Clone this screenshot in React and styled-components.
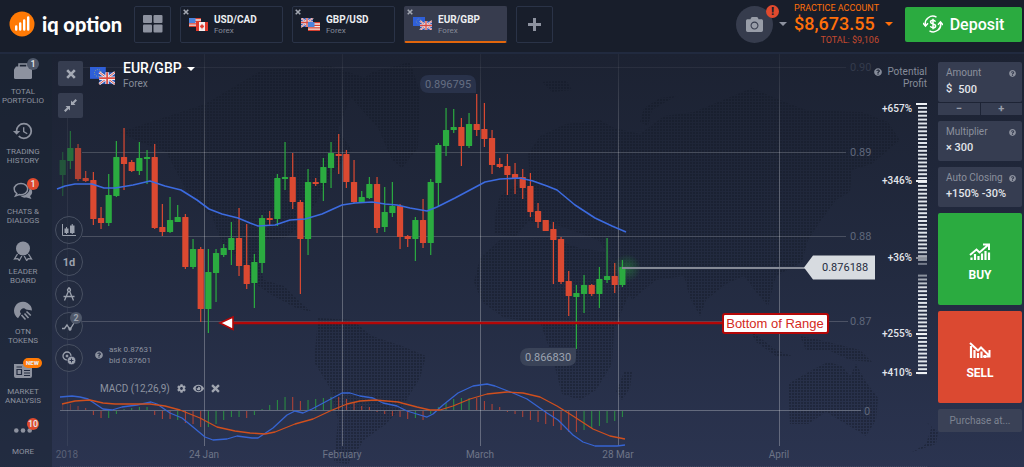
import React, { useState } from 'react'
import styled, { createGlobalStyle } from 'styled-components'
import { FaCamera, FaCog, FaEye, FaQuestionCircle } from 'react-icons/fa'
import { MdHistory } from 'react-icons/md'

const GREEN = '#2bab40'
const RED = '#db4931'
const STEP = 7.667

// high, body top, body bottom, low, up/down, macd histogram
const candles = [
  [152, 160, 175, 196, 1, 6, 0],
  [131, 148, 161, 169, 1, 6, 0],
  [144, 148, 179, 181, 0, 4],
  [171, 178, 181, 182, 0, 2],
  [172, 180, 219, 225, 0, -4],
  [207, 218, 223, 229, 0, -7],
  [174, 195, 223, 226, 1, -7],
  [141, 157, 196, 197, 1, -3],
  [128, 157, 164, 190, 0, 1, 1],
  [160, 162, 171, 172, 0, 2, 1],
  [142, 158, 171, 175, 1, 3],
  [150, 157, 159, 184, 1, 3],
  [144, 157, 228, 229, 0, -4],
  [204, 227, 232, 236, 0, -8],
  [197, 220, 232, 233, 1, -8, 0],
  [205, 217, 222, 222, 1, -9],
  [214, 217, 267, 269, 0, -12],
  [239, 249, 267, 269, 1, -13, 0],
  [247, 249, 309, 322, 0, -16],
  [249, 272, 309, 333, 1, -16],
  [249, 253, 273, 302, 1, -13],
  [244, 248, 255, 257, 1, -9],
  [222, 238, 250, 265, 1, -6],
  [208, 238, 266, 276, 0, -6, 1],
  [224, 265, 284, 289, 0, -7],
  [254, 262, 283, 308, 1, -4],
  [215, 218, 263, 273, 1, 1],
  [211, 218, 219, 225, 0, 5, 1],
  [174, 178, 219, 226, 1, 10],
  [142, 177, 179, 190, 1, 13],
  [153, 177, 202, 209, 0, 13],
  [200, 202, 239, 294, 0, 9],
  [169, 182, 239, 255, 1, 10],
  [178, 182, 183, 186, 0, 11, 1],
  [158, 167, 183, 201, 1, 12],
  [142, 153, 168, 188, 1, 13],
  [134, 154, 156, 174, 0, 13],
  [150, 154, 182, 188, 0, 11],
  [160, 182, 202, 203, 0, 8],
  [191, 197, 202, 203, 1, 4, 0],
  [177, 184, 198, 199, 1, 3, 0],
  [177, 184, 228, 233, 0, -1],
  [187, 212, 227, 232, 1, -3, 0],
  [182, 206, 213, 217, 1, -5, 0],
  [204, 206, 237, 249, 0, -6],
  [235, 236, 239, 247, 0, -8],
  [217, 220, 239, 261, 1, -7],
  [199, 220, 243, 248, 0, -9],
  [179, 182, 243, 255, 1, -3],
  [143, 145, 183, 206, 1, 3],
  [108, 130, 146, 156, 1, 7],
  [109, 127, 130, 133, 1, 11],
  [118, 127, 146, 166, 0, 12, 1],
  [113, 124, 146, 148, 1, 12],
  [94, 124, 130, 136, 0, 12],
  [103, 129, 139, 147, 0, 9],
  [130, 138, 165, 174, 0, 6],
  [158, 164, 167, 168, 0, 3],
  [154, 166, 175, 195, 0, -1],
  [163, 174, 178, 194, 0, -3],
  [169, 177, 188, 199, 0, -6],
  [173, 186, 212, 217, 0, -9],
  [203, 211, 222, 228, 0, -11],
  [220, 220, 231, 231, 0, -13],
  [222, 229, 240, 284, 0, -15],
  [237, 239, 282, 284, 0, -19],
  [271, 281, 296, 316, 0, -21],
  [285, 293, 297, 349, 1, -21, 0],
  [275, 285, 294, 313, 1, -19],
  [284, 285, 294, 296, 0, -17, 1],
  [267, 279, 294, 308, 1, -15],
  [238, 276, 280, 283, 1, -12],
  [263, 276, 285, 293, 0, -10, 1],
  [260, 267, 285, 287, 1, -6],
]

const average =
  '57,189 65,186 75,184 92,184 104,188 115,188 133,185 150,181 165,186 181,190 197,200 209,209 222,214 238,218 250,223 258,226 275,225 290,220 305,219 322,214 342,205 355,203 372,202 385,204 397,205 410,208 427,211 437,207 455,198 470,190 485,182 500,179 520,178 533,181 547,186 557,190 575,205 595,218 612,226 626,232'
const macdLine =
  '60,397 72,396 80,397 88,399 103,409 112,410 122,407 137,405 151,402 157,404 170,413 182,418 193,427 205,437 213,440 227,439 237,436 252,438 258,438 273,428 287,415 295,411 303,413 312,409 327,401 342,393 350,393 360,396 373,398 383,403 397,406 407,411 420,415 427,417 433,414 443,405 458,393 473,386 487,384 495,386 513,393 527,399 547,413 558,420 573,435 583,442 595,446 617,446 625,445'
const signalLine =
  '62,404 75,401 90,400 103,403 115,404 150,404 165,406 180,410 200,418 217,427 235,431 250,433 265,434 275,432 295,424 313,419 330,411 347,404 360,401 375,400 398,402 417,407 430,410 440,410 453,406 470,399 487,394 507,392 523,393 540,397 557,406 573,416 593,429 610,436 625,439'

const continents = [
  'M120 132L150 122L205 104L225 92L262 70L330 66L372 80L388 96L350 98L338 130L352 150L330 176L318 200L300 226L285 238L262 240L258 262L264 280L284 286L300 302L312 312L296 308L270 294L250 280L238 258L222 244L212 216L198 204L186 190L166 152L140 142Z',
  'M346 92L372 72L410 62L420 92L418 148L402 168L392 160L378 128Z',
  'M318 318L352 320L372 336L402 346L426 356L420 378L404 404L386 424L364 440L348 464L334 462L338 420L330 388L314 362Z',
  'M480 258L500 240L548 238L580 248L606 252L622 276L636 280L624 306L614 330L612 364L596 390L580 400L562 394L552 356L540 322L504 318L482 302L474 282Z',
  'M496 210L500 196L530 176L528 154L540 136L566 124L600 120L614 128L640 134L664 116L694 112L752 88L780 100L806 110L862 112L888 122L900 140L872 164L852 170L850 192L836 200L820 222L808 240L802 262L776 276L768 306L756 292L744 276L726 284L706 300L700 316L690 298L684 276L656 280L632 300L620 270L598 240L560 226L528 222L516 236L494 234Z',
  'M788 384L812 370L828 362L842 366L850 376L856 364L866 382L878 398L876 420L866 436L846 424L826 412L808 424L790 424Z',
  'M750 330L776 350L792 356L776 356L756 342Z',
  'M800 336L820 340L860 350L872 362L850 360L828 350L806 350Z',
  'M624 372L632 372L630 388L622 400L616 392Z',
  'M640 122L644 108L660 98L676 96L652 110L648 126Z',
  'M542 82L566 80L572 90L552 92Z',
  'M912 452L926 444L932 426L926 422L938 432L936 444Z',
]

const sidebar = [
  ['bag', 'TOTAL', 'PORTFOLIO', '1'],
  ['history', 'TRADING', 'HISTORY'],
  ['chat', 'CHATS &', 'DIALOGS', '1', true],
  ['medal', 'LEADER', 'BOARD'],
  ['otn', 'OTN', 'TOKENS'],
  ['news', 'MARKET', 'ANALYSIS', 'NEW'],
  ['more', 'MORE', '', '10', true],
]

const GlobalStyle = createGlobalStyle`
  * {
    box-sizing: border-box;
  }

  body {
    margin: 0;
    background: #181e2b;
    font-family: Roboto, "Liberation Sans", sans-serif;
    color: #fff;
  }

  button, input {
    font-family: inherit;
    color: inherit;
    border: none;
    padding: 0;
    margin: 0;
  }

  button {
    cursor: pointer;
  }

  svg {
    display: block;
  }
`

const FlagArt = ({ code }) => {
  if (code === 'EU') {
    return (
      <g>
        <rect width="12" height="9" fill="#2f5fd8" />
        <circle cx="6" cy="4.5" r="2.6" fill="none" stroke="#7e9a8c" strokeWidth=".8" strokeDasharray=".7 .9" />
      </g>
    )
  }
  if (code === 'US') {
    return (
      <g>
        <rect width="12" height="9" fill="#f1e6e4" />
        <path d="M0 .7H12M0 3.3H12M0 5.9H12M0 8.4H12" stroke="#d8402f" strokeWidth="1.2" />
        <rect width="6.5" height="5" fill="#4a83dc" />
      </g>
    )
  }
  if (code === 'CA') {
    return (
      <g>
        <rect width="12" height="9" fill="#f3eeee" />
        <path d="M0 0H3V9H0ZM9 0H12V9H9Z" fill="#e0392b" />
        <path d="M6 1.8L7 3.6L8.3 3.7L7.4 5.6L6.3 6V7.2H5.7V6L4.6 5.6L3.7 3.7L5 3.6Z" fill="#e0392b" />
      </g>
    )
  }
  return (
    <g>
      <rect width="12" height="9" fill="#2f55b4" />
      <path d="M0 0L12 9M12 0L0 9" stroke="#eceef5" strokeWidth="1.9" />
      <path d="M0 0L12 9M12 0L0 9" stroke="#db4a40" strokeWidth=".7" />
      <path d="M6 0V9M0 4.5H12" stroke="#eceef5" strokeWidth="2.6" />
      <path d="M6 0V9M0 4.5H12" stroke="#db4a40" strokeWidth="1.3" />
    </g>
  )
}

const FlagPair = ({ back, front, width }) => (
  <svg width={width} viewBox="0 0 19 13" aria-hidden="true">
    <FlagArt code={back} />
    <g transform="translate(7 4)">
      <FlagArt code={front} />
    </g>
  </svg>
)

const Cross = ({ size }) => (
  <svg width={size} height={size} viewBox="0 0 10 10" aria-hidden="true">
    <path d="M1.2 1.2L8.8 8.8M8.8 1.2L1.2 8.8" stroke="currentColor" strokeWidth="2.6" />
  </svg>
)

const SideIcon = ({ name }) => {
  if (name === 'history') return <MdHistory size={22} />
  return (
    <svg width="20" height="20" viewBox="0 0 20 20" fill="currentColor" aria-hidden="true">
      {name === 'bag' && (
        <>
          <path d="M6 6V3H14V6" fill="none" stroke="currentColor" strokeWidth="1.5" />
          <path d="M3 5.5H17L19 8.5V16.5Q19 18 17.5 18H2.5Q1 18 1 16.5V8.5Z" />
        </>
      )}
      {name === 'chat' && (
        <>
          <path d="M8 2.5C4 2.5 1.2 5 1.2 8C1.2 10 2.3 11.5 3.8 12.5L2.5 15L6.4 13.6C11 14.2 14.7 11.5 14.7 8C14.7 5 12 2.5 8 2.5Z" fill="none" stroke="currentColor" strokeWidth="1.5" />
          <path d="M16.5 6.5C20.5 9 19.5 13.5 17 15L18.5 18L13.5 16.5C10.5 17 8.5 16 7.5 14.8C13 15 16.8 11.5 16.5 6.5Z" />
        </>
      )}
      {name === 'medal' && (
        <>
          <circle cx="10" cy="7.5" r="7" />
          <path d="M4.5 13L1.5 18L4.8 17.6L6.3 19.5L8.8 15M15.5 13L18.5 18L15.2 17.6L13.7 19.5L11.2 15" fill="none" stroke="currentColor" strokeWidth="1.3" />
        </>
      )}
      {name === 'otn' && (
        <>
          <path d="M5 17.2A9 9 0 1 1 19 9.5L13 8.5A3.2 3.2 0 1 0 8 12.8Z" />
          <path d="M8.5 14L12.5 18.5M11.5 12.5L15.5 17M13.5 10.5L17.8 14.5" stroke="currentColor" strokeWidth="1.6" />
        </>
      )}
      {name === 'news' && (
        <>
          <path d="M1 3H19V15Q19 17 17 17H3Q1 17 1 15Z" />
          <path d="M3.5 6H9M4 8.500H8.500V13.500H4ZM11 9.500H17M11 12H17M11 14.500H17" stroke="#222a3f" strokeWidth="1.2" fill="none" />
        </>
      )}
      {name === 'more' && (
        <>
          <circle cx="3.3" cy="9.5" r="2.3" />
          <circle cx="10" cy="9.5" r="2.3" />
          <circle cx="16.7" cy="9.5" r="2.3" />
        </>
      )}
    </svg>
  )
}

const Header = () => (
  <TopBar>
    <Logo href="#home">
      <svg width="26" height="26" viewBox="0 0 26 26" aria-hidden="true">
        <circle cx="13" cy="13" r="12.5" fill="#ff7a05" />
        <path d="M7.2 18.5V15.5M11.2 18.5V12.5M15.2 18.5V9.5M19.2 18.5V6.5" stroke="#fff" strokeWidth="2.4" strokeLinecap="round" />
      </svg>
      <span>iq option</span>
    </Logo>
    <Tabs>
      <SquareButton aria-label="All instruments">
        <svg width="20" height="18" viewBox="0 0 20 18" fill="#8d929f">
          <rect width="9" height="8" rx="1" />
          <rect x="10.5" width="9" height="8" rx="1" />
          <rect y="9.5" width="9" height="8" rx="1" />
          <rect x="10.5" y="9.5" width="9" height="8" rx="1" />
        </svg>
      </SquareButton>
      {[
        ['USD/CAD', 'US', 'CA'],
        ['GBP/USD', 'GB', 'US'],
        ['EUR/GBP', 'EU', 'GB'],
      ].map(([pair, back, front]) => (
        <Tab key={pair} $active={pair === 'EUR/GBP'}>
          <TabClose><Cross size={6} /></TabClose>
          <FlagPair back={back} front={front} width={19} />
          <TabText>
            <b>{pair}</b>
            <span>Forex</span>
          </TabText>
        </Tab>
      ))}
      <SquareButton aria-label="Add instrument">
        <svg width="13" height="13" viewBox="0 0 13 13">
          <path d="M6.5 0V13M0 6.5H13" stroke="#8d929f" strokeWidth="3" />
        </svg>
      </SquareButton>
    </Tabs>
    <Account>
      <Avatar aria-label="Profile">
        <FaCamera size={17} />
        <AlertBadge>!</AlertBadge>
      </Avatar>
      <Caret $color="#8d929f" />
      <Balance>
        <small>PRACTICE ACCOUNT</small>
        <strong>$8,673.55</strong>
        <em>TOTAL: $9,106</em>
      </Balance>
      <Caret $color="#ff6f0a" />
      <Deposit>
        <svg width="20" height="18" viewBox="0 0 20 18" fill="none" stroke="#fff" strokeWidth="1.5" aria-hidden="true">
          <path d="M2.5 10.5A7.5 7.5 0 0 1 13.5 2.2M17.5 7.5A7.5 7.5 0 0 1 6.5 15.8" />
          <path d="M0 8L2.5 11L5 8.2M15 9.8L17.5 7L20 10" />
          <path d="M12.5 6.7C12 5.6 11 5.3 10 5.3C8.5 5.3 7.5 6 7.5 7.1C7.5 9.6 12.6 8.2 12.6 10.9C12.6 12 11.5 12.7 10 12.7C8.8 12.7 7.7 12.2 7.4 11.1M10 3.8V14.2" />
        </svg>
        Deposit
      </Deposit>
    </Account>
  </TopBar>
)

const Chart = () => (
  <Plot viewBox="52 54 886 413" preserveAspectRatio="xMinYMin meet" aria-label="EUR/GBP chart">
    <defs>
      <pattern id="dots" width="3" height="3" patternUnits="userSpaceOnUse">
        <rect width="2" height="2" fill="#131926" />
      </pattern>
      <radialGradient id="glow">
        <stop offset="0" stopColor={GREEN} stopOpacity=".4" />
        <stop offset="1" stopColor={GREEN} stopOpacity="0" />
      </radialGradient>
      <linearGradient id="fade" x1="0" y1="54" x2="0" y2="180" gradientUnits="userSpaceOnUse">
        <stop offset="0" stopColor="#fff" stopOpacity=".04" />
        <stop offset="1" stopColor="#fff" stopOpacity=".27" />
      </linearGradient>
    </defs>
    <g fill="url(#dots)" opacity=".4">
      {continents.map((d) => <path key={d} d={d} />)}
    </g>
    <g fill="url(#fade)">
      {[204, 342, 480, 618, 779].map((x) => <rect key={x} x={x} y="54" width="1" height="392" />)}
    </g>
    <g stroke="#fff" fill="none">
      <path d="M67.5 118V446M82 67.5H846" opacity=".06" />
      <path d="M82 152.5H846M82 236.5H846M82 321.5H848" opacity=".18" />
      <path d="M60 410.5H861" opacity=".28" />
      <path d="M60 466.5H927" opacity=".1" strokeDasharray="1 1" />
    </g>
    <g fontSize="11" fill="#5f677b">
      <text x="850" y="71" opacity=".35">0.90</text>
      <text x="850" y="156">0.89</text>
      <text x="850" y="240">0.88</text>
      <text x="850" y="325">0.87</text>
      <text x="864" y="415">0</text>
    </g>
    <g fontSize="10" fill="#6d7487" textAnchor="middle">
      <text x="67" y="458" opacity=".7">2018</text>
      <text x="204" y="458">24 Jan</text>
      <text x="342" y="458">February</text>
      <text x="480" y="458">March</text>
      <text x="618" y="458">28 Mar</text>
      <text x="779" y="458">April</text>
    </g>

    {candles.map(([high, top, bottom, low, up, hist, histUp = up], i) => {
      const x = 62.7 + i * STEP
      const color = up ? GREEN : RED
      return (
        <g key={i} opacity={[0.35, 0.55, 0.75, 0.85][i] || 1}>
          <rect x={x - 0.6} y={high} width="1.2" height={low - high} fill={color} />
          <rect x={x - 3.1} y={top} width="6.2" height={Math.max(bottom - top, 2)} rx=".6" fill={color} />
          <rect
            x={x - 0.5}
            y={hist > 0 ? 410 - hist : 411}
            width="1"
            height={Math.abs(hist)}
            fill={histUp ? GREEN : RED}
            opacity=".8"
          />
        </g>
      )
    })}
    <g fill="none" strokeLinejoin="round">
      <polyline points={average} stroke="#3c6be0" strokeWidth="1.6" />
      <polyline points={macdLine} stroke="#3664d2" strokeWidth="1.3" />
      <polyline points={signalLine} stroke="#d04f1d" strokeWidth="1.3" />
    </g>

    <circle cx="627" cy="268" r="14" fill="url(#glow)" />
    <rect x="622" y="267" width="184" height="2" fill="#858a96" />
    <path d="M804 267.5L813 255.5H875V279.5H813Z" fill="#d7dbe0" />
    <text x="822" y="271" fontSize="11" fill="#252c3f">0.876188</text>

    <path d="M429 75H467Q476 75 476 84V93H429Q420 93 420 84Q420 75 429 75Z" fill="#29324a" />
    <text x="448" y="88" fontSize="11" fill="#656e82" textAnchor="middle">0.896795</text>
    <path d="M529 348H576V358Q576 366 567 366H529Q520 366 520 357Q520 348 529 348Z" fill="#3a4358" />
    <text x="548" y="361" fontSize="11" fill="#9ca3b1" textAnchor="middle">0.866830</text>

    <path d="M233 323H722" stroke="#b40707" strokeWidth="2.4" />
    <path d="M220 323L233 317V329.5Z" fill="#fff" stroke="#b40707" strokeWidth="1.6" />
    <rect x="723" y="314" width="105" height="19" rx="2" fill="#fff" stroke="#b40707" strokeWidth="2" />
    <text x="775" y="328" fontSize="13" fontFamily="Liberation Sans, sans-serif" fill="#d42a22" textAnchor="middle">
      Bottom of Range
    </text>
  </Plot>
)

const ChartTools = () => (
  <ToolColumn>
    <ToolSquare aria-label="Close chart"><Cross size={10} /></ToolSquare>
    <ToolSquare aria-label="Collapse">
      <svg width="13" height="13" viewBox="0 0 13 13" fill="currentColor">
        <path d="M7 6V1.5L8.5 3L11.5 0L13 1.5L10 4.5L11.5 6ZM6 7V11.5L4.5 10L1.5 13L0 11.5L3 8.5L1.5 7Z" />
      </svg>
    </ToolSquare>
    <RoundTools>
      <RoundTool aria-label="Chart type">
        <svg width="14" height="12" viewBox="0 0 14 12" fill="currentColor">
          <path d="M.5 0V11.5H14" fill="none" stroke="currentColor" />
          <path d="M2.500 4.500H6.500V9H2.500ZM4 3H5V10H4ZM8 1.500H12.500V9H8ZM9.700 0H10.800V10H9.700Z" />
        </svg>
      </RoundTool>
      <RoundTool aria-label="Candle size">1d</RoundTool>
      <RoundTool aria-label="Drawing">
        <svg width="14" height="14" viewBox="0 0 14 14" fill="none" stroke="currentColor" strokeWidth="1.3">
          <circle cx="7" cy="3" r="1.5" />
          <path d="M7 0V2M6.3 4.5L2.5 13.5M7.7 4.5L11.5 13.5M1.5 9.5H12.5" />
        </svg>
      </RoundTool>
      <RoundTool aria-label="Indicators">
        <svg width="14" height="10" viewBox="0 0 14 10" fill="none" stroke="currentColor" strokeWidth="1.3">
          <path d="M0 7.5H2.5L5 4L8 8.5L12 2" />
          <circle cx="8" cy="8" r="1" />
        </svg>
        <ToolBadge>2</ToolBadge>
      </RoundTool>
      <RoundTool aria-label="Trade options">
        <svg width="14" height="14" viewBox="0 0 14 14" fill="none" stroke="currentColor">
          <circle cx="5" cy="5" r="4" strokeWidth="1.3" />
          <circle cx="5" cy="5" r="1" fill="currentColor" />
          <circle cx="9.5" cy="9.5" r="4.3" fill="currentColor" stroke="#29314a" strokeWidth=".8" />
          <path d="M9.5 7.5V11.5M7.5 9.5H11.5" stroke="#29314a" />
        </svg>
      </RoundTool>
    </RoundTools>
  </ToolColumn>
)

const ChartInfo = () => (
  <InfoColumn>
    <PairTitle>
      <FlagPair back="EU" front="GB" width={25} />
      <PairText>
        <h1>EUR/GBP <Caret $color="#fff" /></h1>
        <span>Forex</span>
      </PairText>
    </PairTitle>
    <Quotes>
      <FaQuestionCircle size={8} />
      <p>ask 0.87631<br />bid 0.87601</p>
    </Quotes>
    <Indicator>
      <span>MACD (12,26,9)</span>
      <button aria-label="Indicator settings"><FaCog size={9} /></button>
      <button aria-label="Hide indicator"><FaEye size={11} /></button>
      <button aria-label="Remove indicator"><Cross size={9} /></button>
    </Indicator>
  </InfoColumn>
)

const ticks = Array.from({ length: 70 }, (_, i) => i * 3.9)
const marks = [['+657%', 0, 5], ['+346%', 77, 77], ['+36%', 154, 154], ['+255%', 230, 230], ['+410%', 269, 269]]

const ProfitScale = () => (
  <Profit>
    <ProfitTitle>
      <FaQuestionCircle size={8} />
      <span>Potential<br />Profit</span>
    </ProfitTitle>
    <svg width="48" height="278" viewBox="0 0 48 278">
      {ticks.filter((y) => y < 160 || y > 168).map((y) => (
        <rect
          key={y}
          x="39"
          y={y}
          width="9"
          height="2"
          fill="#dfe4ea"
          opacity={Math.min(1, 0.3 + Math.abs(y - 164) / 30)}
        />
      ))}
      {marks.map(([label, tick, y]) => (
        <g key={label}>
          <rect x="37" y={tick} width="11" height="2" fill="#eef1f4" opacity={label === '+36%' ? 0.5 : 1} />
          <text x="33" y={y + 4} fontSize="10" fontWeight="500" fill="#e4e7ec" textAnchor="end">{label}</text>
        </g>
      ))}
    </svg>
  </Profit>
)

const TradePanel = () => {
  const [amount, setAmount] = useState(500)

  return (
    <Trade>
      <div>
        <Field>
          <FieldLabel htmlFor="amount">Amount <FaQuestionCircle size={7} /></FieldLabel>
          <AmountRow>
            <span>$</span>
            <input id="amount" value={amount} onChange={(e) => setAmount(Number(e.target.value) || 0)} />
          </AmountRow>
        </Field>
        <Stepper>
          <button onClick={() => setAmount(Math.max(0, amount - 1))} aria-label="Decrease">−</button>
          <button onClick={() => setAmount(amount + 1)} aria-label="Increase">+</button>
        </Stepper>
      </div>
      <Field as="button">
        <FieldLabel as="span">Multiplier <FaQuestionCircle size={7} /></FieldLabel>
        <FieldValue>× 300</FieldValue>
      </Field>
      <Field as="button">
        <FieldLabel as="span">Auto Closing <FaQuestionCircle size={7} /></FieldLabel>
        <FieldValue>+150% -30%</FieldValue>
      </Field>
      <TradeButton $color={GREEN}>
        <svg width="22" height="18" viewBox="0 0 22 18" fill="none" stroke="#fff" strokeWidth="2" aria-hidden="true">
          <path d="M1 12L7.5 6.5L10.5 9.5L19 2M14 1.5H20V7" />
          <path d="M2.5 17V14.5M6 17V11M9.5 17V13M13 17V10.5M16.5 17V8M20 17V9.5" strokeWidth="2.2" />
        </svg>
        BUY
      </TradeButton>
      <TradeButton $color={RED}>
        <svg width="22" height="18" viewBox="0 0 22 18" fill="none" stroke="#fff" strokeWidth="2" aria-hidden="true">
          <path d="M1 2L9 9.5L12 6.5L20 14.5M20.5 9V15.5H14" />
          <path d="M2 17V5M5.5 17V9M9 17V12M12.5 17V10.5M16 17V14" strokeWidth="2.2" />
        </svg>
        SELL
      </TradeButton>
      <Purchase>Purchase at...</Purchase>
    </Trade>
  )
}

const App = () => (
  <Page>
    <GlobalStyle />
    <Header />
    <Body>
      <Sidebar>
        {sidebar.map(([icon, first, second, badge, alert]) => (
          <SideLink key={icon} href={`#${icon}`}>
            <IconBox>
              <SideIcon name={icon} />
              {badge === 'NEW' && <NewBadge>NEW</NewBadge>}
              {badge && badge !== 'NEW' && <SideBadge $alert={alert}>{badge}</SideBadge>}
            </IconBox>
            <span>{first}<br />{second}</span>
          </SideLink>
        ))}
      </Sidebar>
      <ChartArea>
        <Chart />
        <ChartTools />
        <ChartInfo />
        <ProfitScale />
      </ChartArea>
      <TradePanel />
    </Body>
  </Page>
)

const Page = styled.div`
  min-height: 100vh;
  display: flex;
  flex-direction: column;
`

const TopBar = styled.header`
  height: 54px;
  padding: 0 2px 4px 9px;
  display: flex;
  align-items: center;
  background: #181e2b;
  border-bottom: 2px solid #212a3f;
`

const Logo = styled.a`
  width: 125px;
  display: flex;
  align-items: center;
  gap: 7px;
  color: #fff;
  text-decoration: none;

  span {
    font: 900 20px/24px Lato, sans-serif;
    white-space: nowrap;
  }
`

const Tabs = styled.nav`
  display: flex;
  gap: 9px;
  flex: 1;
`

const SquareButton = styled.button`
  width: 37px;
  height: 37px;
  display: flex;
  align-items: center;
  justify-content: center;
  background: transparent;
  border: 1px solid #2a3347;
  border-radius: 2px;
`

const Tab = styled.button`
  position: relative;
  width: 103px;
  height: 37px;
  padding-left: 8px;
  display: flex;
  align-items: center;
  gap: 6px;
  text-align: left;
  background: ${(props) => (props.$active ? '#373c4e' : 'transparent')};
  border: 1px solid ${(props) => (props.$active ? '#373c4e' : '#2a3347')};
  border-bottom: ${(props) => (props.$active ? '2px solid #e2660c' : '1px solid #2a3347')};
  border-radius: 2px;
`

const TabClose = styled.span`
  position: absolute;
  top: 2px;
  left: 2px;
  color: #a3a8b2;
`

const TabText = styled.span`
  display: flex;
  flex-direction: column;
  padding-top: 2px;

  b {
    font-size: 10px;
    line-height: 12px;
    font-weight: 700;
    color: #eceef1;
  }

  span {
    font-size: 8px;
    line-height: 10px;
    color: #858b99;
  }
`

const Account = styled.div`
  display: flex;
  align-items: center;
  gap: 6px;
`

const Avatar = styled.button`
  position: relative;
  width: 37px;
  height: 37px;
  display: flex;
  align-items: center;
  justify-content: center;
  border-radius: 50%;
  background: #363c4d;
  color: #989da8;
`

const AlertBadge = styled.span`
  position: absolute;
  top: -1px;
  right: -6px;
  width: 13px;
  height: 13px;
  border-radius: 50%;
  background: #e04a2e;
  color: #181e2b;
  font-size: 11px;
  line-height: 13px;
  font-weight: 900;
  text-align: center;
`

const Caret = styled.i`
  display: inline-block;
  border: 4px solid transparent;
  border-top-color: ${(props) => props.$color};
  border-bottom: none;
`

const Balance = styled.div`
  display: flex;
  flex-direction: column;
  margin-left: 1px;
  padding-top: 1px;
  color: #ff6f0a;

  small {
    font-size: 9px;
    line-height: 8px;
    font-weight: 400;
  }

  strong {
    font-size: 18px;
    line-height: 24px;
    font-weight: 500;
  }

  em {
    font-size: 9px;
    line-height: 9px;
    font-style: normal;
    font-weight: 400;
    text-align: right;
    color: #c64a2f;
  }
`

const Deposit = styled.button`
  width: 117px;
  height: 35px;
  margin-left: 6px;
  display: flex;
  align-items: center;
  justify-content: center;
  gap: 7px;
  background: ${GREEN};
  border-radius: 2px;
  font-size: 16px;
  font-weight: 500;
`

const Body = styled.main`
  flex: 1;
  display: flex;
  background: linear-gradient(#1c2232, #222a3f 50%, #2b3450);
`

const Sidebar = styled.nav`
  width: 52px;
  padding-top: 6px;
  background: rgba(26, 36, 50, 0.5);
`

const SideLink = styled.a`
  height: 60px;
  display: flex;
  flex-direction: column;
  align-items: center;
  gap: 6px;
  color: #8d929f;
  font-size: 8px;
  line-height: 9px;
  text-align: center;
  text-decoration: none;
  margin-right: 6px;

  &:last-child {
    height: 44px;
  }
`

const IconBox = styled.span`
  position: relative;
  height: 21px;
  display: flex;
  align-items: center;
`

const SideBadge = styled.b`
  position: absolute;
  top: -2px;
  right: -6px;
  width: 12px;
  height: 12px;
  border-radius: 50%;
  background: ${(props) => (props.$alert ? '#e04a2e' : '#4f586a')};
  color: #e6e8ec;
  font-weight: 500;
  font-size: 9px;
  line-height: 12px;
`

const NewBadge = styled(SideBadge)`
  right: -9px;
  width: 19px;
  height: 10px;
  border-radius: 5px;
  background: #ff7a05;
  font-size: 6px;
  line-height: 10px;
  font-weight: 900;
`

const ChartArea = styled.section`
  position: relative;
  flex: 1;
  min-width: 0;
  padding: 7px 11px 0 3px;
  display: flex;
`

const Plot = styled.svg`
  position: absolute;
  inset: 0;
  width: 100%;
  height: 100%;
`

const ToolColumn = styled.div`
  position: relative;
  width: 28px;
  display: flex;
  flex-direction: column;
  align-items: center;
  gap: 7px;
`

const ToolSquare = styled.button`
  width: 25px;
  height: 25px;
  margin-left: 3px;
  display: flex;
  align-items: center;
  justify-content: center;
  background: #363d50;
  color: #a4a9b4;
  border-radius: 2px;
`

const RoundTools = styled.div`
  margin-top: 91px;
  display: flex;
  flex-direction: column;
  gap: 4px;
`

const RoundTool = styled.button`
  position: relative;
  width: 28px;
  height: 28px;
  display: flex;
  align-items: center;
  justify-content: center;
  background: rgba(35, 43, 62, 0.6);
  border: 1px solid #485062;
  border-radius: 50%;
  color: #9ba1ad;
  font-size: 11px;
  font-weight: 700;
`

const ToolBadge = styled.span`
  position: absolute;
  top: -1px;
  right: 0;
  width: 12px;
  height: 12px;
  border-radius: 50%;
  background: #4f586a;
  font-size: 9px;
  line-height: 12px;
`

const InfoColumn = styled.div`
  position: relative;
  flex: 1;
  padding-left: 7px;
`

const PairTitle = styled.div`
  display: flex;
  align-items: center;
  gap: 8px;
`

const PairText = styled.div`
  h1 {
    margin: 0;
    display: flex;
    align-items: center;
    gap: 5px;
    font-size: 14px;
    line-height: 15px;
    font-weight: 500;
  }

  span {
    font-size: 10px;
    line-height: 15px;
    color: #858b99;
    display: block;
  }
`

const Quotes = styled.div`
  margin: 253px 0 0 5px;
  display: flex;
  align-items: center;
  gap: 6px;
  color: #8d93a0;
  font-size: 8px;
  line-height: 11px;

  p {
    margin: 0;
  }
`

const Indicator = styled.div`
  margin: 16px 0 0 10px;
  display: flex;
  align-items: center;
  gap: 7px;
  height: 12px;
  font-size: 10px;
  color: #8d93a0;

  button {
    background: none;
    color: #a0a5b0;
  }
`

const Profit = styled.aside`
  position: relative;
  display: flex;
  flex-direction: column;
  align-items: flex-end;
  gap: 13px;
`

const ProfitTitle = styled.div`
  padding-top: 5px;
  display: flex;
  gap: 5px;
  color: #858b99;
  font-size: 10px;
  line-height: 12px;
  text-align: right;

  svg {
    margin-top: 2px;
  }
`

const Trade = styled.aside`
  width: 86px;
  padding: 8px 2px 0 0;
  display: flex;
  flex-direction: column;
  gap: 6px;
`

const Field = styled.div`
  width: 100%;
  height: 40px;
  padding: 4px 6px 0 8px;
  display: flex;
  flex-direction: column;
  background: #363d51;
  border-radius: 2px;
  text-align: left;
`

const FieldLabel = styled.label`
  width: 100%;
  display: flex;
  align-items: center;
  justify-content: space-between;
  font-size: 10px;
  line-height: 14px;
  color: #8b909d;
  white-space: nowrap;
`

const FieldValue = styled.span`
  font-size: 11px;
  line-height: 18px;
  font-weight: 500;
  color: #e2e5ea;
`

const AmountRow = styled(FieldValue)`
  display: flex;
  gap: 6px;

  input {
    width: 100%;
    height: 18px;
    background: none;
    font-size: 11px;
    font-weight: 500;
    outline: none;
  }
`

const Stepper = styled.div`
  margin-top: 1px;
  display: grid;
  grid-template-columns: 1fr 1fr;
  gap: 1px;

  button {
    height: 12px;
    background: #363d51;
    color: #9a9fab;
    font-size: 11px;
    line-height: 12px;
    font-weight: 700;
  }
`

const TradeButton = styled.button`
  height: 92px;
  padding-top: 6px;
  display: flex;
  flex-direction: column;
  align-items: center;
  justify-content: center;
  gap: 7px;
  background: ${(props) => props.$color};
  border-radius: 2px;
  font-size: 12px;
  font-weight: 700;
`

const Purchase = styled.button`
  height: 23px;
  background: #3a4156;
  color: #7d8391;
  font-size: 10px;
  border-radius: 2px;
`

export default App
